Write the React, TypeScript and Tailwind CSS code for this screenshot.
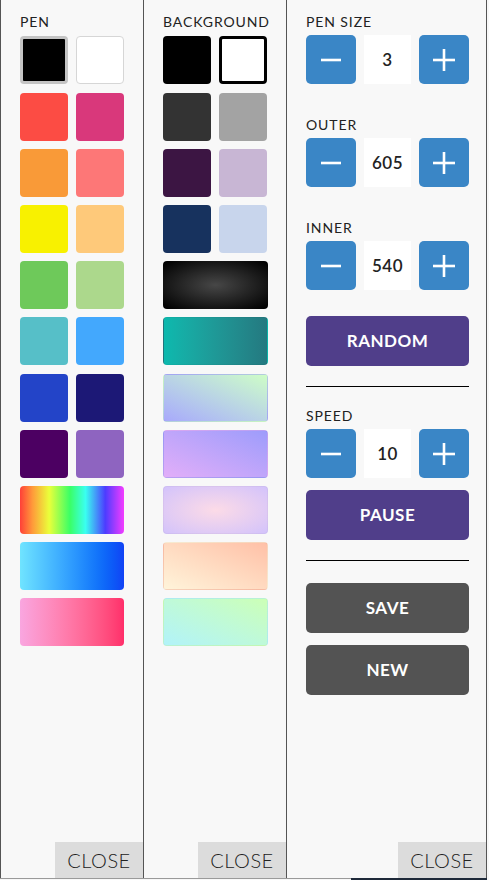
import React from 'react';

const font = { fontFamily: 'Lato, "Liberation Sans", sans-serif' };

const penSquares = [
  ['bg-black border-[3px] border-[#c4c4c4]', 'bg-white border border-[#d6d6d6]'],
  ['bg-[#fc4c44]', 'bg-[#d9387b]'],
  ['bg-[#f99a38]', 'bg-[#fd7777]'],
  ['bg-[#f8f100]', 'bg-[#fec97a]'],
  ['bg-[#6ec95a]', 'bg-[#acd88c]'],
  ['bg-[#56bfc8]', 'bg-[#43a8fd]'],
  ['bg-[#2344c8]', 'bg-[#1c1876]'],
  ['bg-[#4c0062]', 'bg-[#8e64c0]'],
];

const penWide = [
  'bg-[linear-gradient(to_right,#ff4038,#ff9a3a_12%,#eaff3a_28%,#3aff66_48%,#3afff0_63%,#4c3cff_82%,#f43cff)]',
  'bg-linear-to-r from-[#70e4ff] to-[#1242f5]',
  'bg-linear-to-r from-[#f9a6e0] to-[#ff2e6a]',
];

const bgSquares = [
  ['bg-black', 'bg-white border-[3px] border-black'],
  ['bg-[#333333]', 'bg-[#a3a3a3]'],
  ['bg-[#3c1543]', 'bg-[#c8b6d4]'],
  ['bg-[#17325e]', 'bg-[#c8d5ec]'],
];

const bgWide = [
  'bg-[radial-gradient(ellipse_at_center,#474747,#000000)]',
  'bg-linear-to-r from-[#0cb9ae] to-[#247980]',
  'bg-linear-to-tr from-[#a8a9fb] to-[#cefdc6]',
  'bg-linear-to-tr from-[#e2aef9] to-[#9d9cfb]',
  'bg-[radial-gradient(ellipse_at_center,#fcdbe7,#d3c3fb)]',
  'bg-linear-to-tr from-[#fff4da] to-[#ffc0a7]',
  'bg-linear-to-tr from-[#b2f3f9] to-[#ccffb6]',
];

// rows 2 and 7 sit one pixel lower in the reference
const rowGap = (i: number) => (i === 1 || i === 6 ? 'mt-[9px]' : i === 0 ? '' : 'mt-[8px]');

const CloseButton: React.FC = () => (
  <button className="mt-auto self-end w-[88px] h-[36px] bg-[#dcdcdc] text-[20px] font-light text-[#222] tracking-[0.5px] flex items-center justify-center">
    CLOSE
  </button>
);

const Label: React.FC<{ text: string }> = ({ text }) => (
  <div className="text-[14px] leading-[20px] text-[#222] tracking-[0.9px]">{text}</div>
);

const Stepper: React.FC<{ label: string; value: number }> = ({ label, value }) => (
  <div>
    <Label text={label} />
    <div className="mt-[3px] flex items-center gap-[8px]">
      <button className="w-[50px] h-[49px] rounded-[5px] bg-[#3a86c6] flex items-center justify-center">
        <svg width="22" height="22" viewBox="0 0 22 22">
          <line x1="1" y1="11" x2="21" y2="11" stroke="white" strokeWidth="2.6" />
        </svg>
      </button>
      <div className="w-[47px] h-[49px] bg-white flex items-center justify-center text-[17px] font-semibold text-[#222] tracking-[0.5px]">
        {value}
      </div>
      <button className="w-[50px] h-[49px] rounded-[5px] bg-[#3a86c6] flex items-center justify-center">
        <svg width="22" height="22" viewBox="0 0 22 22">
          <line x1="0" y1="11" x2="22" y2="11" stroke="white" strokeWidth="2.6" />
          <line x1="11" y1="0" x2="11" y2="22" stroke="white" strokeWidth="2.6" />
        </svg>
      </button>
    </div>
  </div>
);

const ActionButton: React.FC<{ text: string; color: string }> = ({ text, color }) => (
  <button
    className={`w-[163px] h-[50px] rounded-[5px] text-white text-[17px] font-bold tracking-[0.5px] flex items-center justify-center ${color}`}
  >
    {text}
  </button>
);

const App: React.FC = () => {
  return (
    <div className="w-[489px] h-[880px] bg-[#f8f8f8]" style={font}>
      <div className="flex h-[878px]">
        {/* Pen colours */}
        <div className="w-[144px] border-l border-r border-[#555] flex flex-col">
          <div className="pt-[12px] pl-[19px]">
            <Label text="PEN" />
            <div className="mt-[4px] flex flex-col">
              {penSquares.map((row, i) => (
                <div key={i} className={`flex gap-[8px] ${rowGap(i)}`}>
                  {row.map((c, j) => (
                    <div key={j} className={`w-[48px] h-[48px] rounded-[4px] ${c}`} />
                  ))}
                </div>
              ))}
              {penWide.map((c, i) => (
                <div key={i} className={`mt-[8px] w-[104px] h-[48px] rounded-[4px] ${c}`} />
              ))}
            </div>
          </div>
          <CloseButton />
        </div>

        {/* Background colours */}
        <div className="w-[143px] border-r border-[#555] flex flex-col">
          <div className="pt-[12px] pl-[19px]">
            <Label text="BACKGROUND" />
            <div className="mt-[4px] flex flex-col">
              {bgSquares.map((row, i) => (
                <div key={i} className={`flex gap-[8px] ${rowGap(i)}`}>
                  {row.map((c, j) => (
                    <div key={j} className={`w-[48px] h-[48px] rounded-[4px] ${c}`} />
                  ))}
                </div>
              ))}
              {bgWide.map((c, i) => (
                <div
                  key={i}
                  className={`w-[105px] h-[48px] rounded-[4px] border border-[#00000008] ${i === 2 ? 'mt-[9px]' : 'mt-[8px]'} ${c}`}
                />
              ))}
            </div>
          </div>
          <CloseButton />
        </div>

        {/* Controls */}
        <div className="w-[200px] border-r border-[#555] flex flex-col">
          <div className="pt-[12px] pl-[19px] flex flex-col">
            <Stepper label="PEN SIZE" value={3} />
            <div className="mt-[31px]">
              <Stepper label="OUTER" value={605} />
            </div>
            <div className="mt-[31px]">
              <Stepper label="INNER" value={540} />
            </div>
            <div className="mt-[26px]">
              <ActionButton text="RANDOM" color="bg-[#503e8a]" />
            </div>
            <div className="mt-[20px] w-[163px] h-px bg-black" />
            <div className="mt-[19px]">
              <Stepper label="SPEED" value={10} />
            </div>
            <div className="mt-[12px]">
              <ActionButton text="PAUSE" color="bg-[#503e8a]" />
            </div>
            <div className="mt-[20px] w-[163px] h-px bg-black" />
            <div className="mt-[22px]">
              <ActionButton text="SAVE" color="bg-[#535353]" />
            </div>
            <div className="mt-[12px]">
              <ActionButton text="NEW" color="bg-[#535353]" />
            </div>
          </div>
          <CloseButton />
        </div>
      </div>
      <div className="h-[2px] flex">
        <div className="w-[351px] h-px bg-[#9a9a9a]" />
        <div className="w-[136px] h-[2px] bg-[#1f2a3a]" />
      </div>
    </div>
  );
};

export default App;
